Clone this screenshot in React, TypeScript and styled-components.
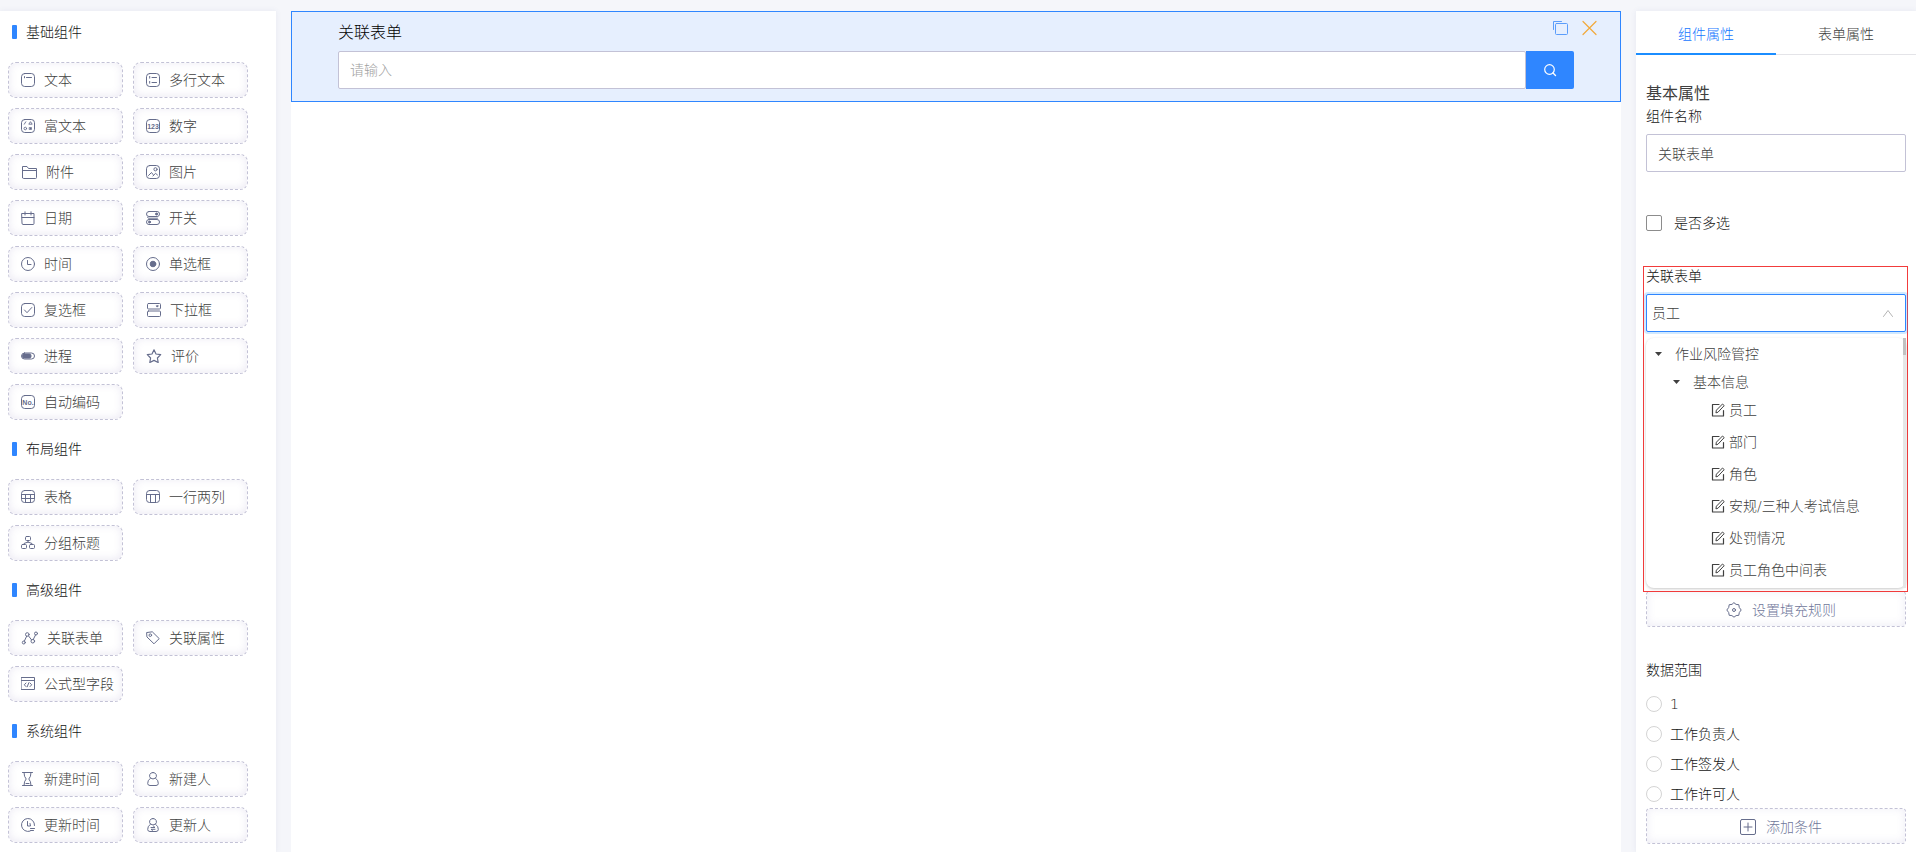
import React, { useState } from "react";
import styled, { createGlobalStyle } from "styled-components";

const color = {
  page: "#f5f6fa",
  primary: "#2f86ff",
  tab: "#1b8dff",
  border: "#c3c2d6",
  icon: "#666d8c",
  text: "#404040",
  strong: "#141414",
};

const GlobalStyle = createGlobalStyle`
  *, *::before, *::after { box-sizing: border-box; }
  body {
    margin: 0;
    background: ${color.page};
    color: ${color.text};
    font: 300 14px/22px "DejaVu Sans", "Noto Sans CJK SC", sans-serif;
  }
  button, input, select { font: inherit; color: inherit; }
  svg { display: block; flex: none; }
`;

/* ---------- icons ---------- */

const Svg = styled.svg`
  fill: none;
  stroke: currentColor;
  stroke-width: 1;
  stroke-linecap: round;
  stroke-linejoin: round;
`;

const Glyphs = styled.text`
  font: 700 7px "Liberation Sans Narrow", "Liberation Sans", sans-serif;
  fill: currentColor;
  stroke: none;
  text-anchor: middle;
`;

const Frame = () => <rect x="0.5" y="0.5" width="13" height="13" rx="3.2" />;

const icons: Record<string, { w?: number; art: React.ReactNode }> = {
  text: { art: <><Frame /><path d="M3.5 3.6v1.2M5.5 4.5h5" /></> },
  multiline: { art: <><Frame /><path d="M3.7 3.4v1.8M3.7 8.4v1.8M6 4.5h4.5M6 9.5h4.5" /></> },
  rich: {
    art: <><Frame /><path d="M3.3 5.2 4.8 2.8M8.2 5.2h3L9.7 3z" strokeWidth=".9" /><circle cx="4.300" cy="9.500" r="1.300" strokeWidth=".9" /><rect x="8.500" y="8.500" width="2" height="2" fill="currentColor" strokeWidth=".6" /></>,
  },
  number: { art: <><Frame /><Glyphs x="7" y="9.500">123</Glyphs></> },
  folder: { w: 16, art: <path d="M1.500 12.500V1.500H6L7.500 3.500H15.500V12.500Q15.500 13.500 14.500 13.500H2.500Q1.500 13.500 1.500 12.500ZM1.500 5.500H15.500" /> },
  image: { art: <><Frame /><circle cx="9.500" cy="4.300" r="1.600" /><path d="M2.500 10.500 5.500 7.500 7 9.500M7 11 9.500 8.300 11.500 10" /></> },
  date: { art: <path d="M1 2.500H13V12.500Q13 13.500 12 13.500H2Q1 13.500 1 12.500ZM1 6.500H13M4 .8V4M10 .8V4" /> },
  toggle: {
    art: <><rect x=".5" y=".5" width="13" height="5" rx="2.500" /><rect x=".5" y="8.500" width="13" height="5" rx="2.500" /><path d="M1.500 6.500Q2 7.200 3 7.200H11.500" /><circle cx="10.500" cy="3" r="1" fill="currentColor" /><circle cx="3.500" cy="11" r="1" fill="currentColor" /></>,
  },
  clock: { art: <><circle cx="7" cy="7" r="6.500" /><path d="M6.500 3.500V7.500H10" /></> },
  radio: { art: <><circle cx="7" cy="7" r="6.500" /><circle cx="7" cy="7" r="2.800" fill="currentColor" /></> },
  check: { art: <><Frame /><path d="M3.500 7 6 9.700 10.800 4.500" /></> },
  select: {
    w: 15,
    art: <><rect x="1.500" y=".5" width="13" height="5.500" rx="1" /><rect x="1.500" y="8" width="13" height="5.500" rx="1" /><path d="M10.700 2.800h1.600l-.8 1z" fill="currentColor" /></>,
  },
  progress: { art: <><rect x=".5" y="4" width="13" height="6" rx="3" /><rect x="1.500" y="5" width="8.500" height="4" rx="1.500" fill="currentColor" /></> },
  star: { w: 16, art: <path d="M8 .8 10 5 14.700 5.700 11.400 9 12.200 13.500 8 11.400 3.800 13.500 4.600 9 1.300 5.700 6 5Z" strokeWidth="1.200" /> },
  code: { art: <><Frame /><Glyphs x="7" y="9.500">No.</Glyphs></> },
  table: { art: <><rect x=".5" y=".5" width="13" height="12" rx="3" /><path d="M.5 4.500H13.500M.5 8.500H13.500M4.500 4.500V12.500M9.500 4.500V12.500" /></> },
  columns: { art: <><rect x=".5" y=".5" width="13" height="12" rx="3" /><path d="M.5 4.500H13.500M4.500 4.500V12.500M9.500 4.500V12.500" /></> },
  group: { art: <><rect x="4.500" y=".5" width="5" height="4" rx="1" /><rect x=".5" y="8.500" width="5" height="4" rx="1" /><rect x="8.500" y="8.500" width="5" height="4" rx="1" /><path d="M7 4.500V6.500M3 8.500V7.500L7 6 11 7.500V8.500" /></> },
  relation: {
    w: 17,
    art: <><circle cx="2.800" cy="11.500" r="1.500" /><circle cx="6.300" cy="3.500" r="1.800" /><circle cx="11.800" cy="10.200" r="1.800" /><circle cx="15" cy="2.500" r="1.500" /><path d="M3.400 10 5.600 5.300M7.500 4.900 10.500 8.800M12.300 8.400 14.500 4" /></>,
  },
  tag: { art: <><path d="M1 1.500 6.300.8 13.200 7.600 8 12.800 1.200 6.200Z" /><circle cx="4.300" cy="4.200" r="1.300" /></> },
  formula: { art: <path d="M.5.5H13.500V12.500H.5ZM.5 3.500H13.500M5 6 3.300 7.800 5 9.600M9 6 10.700 7.800 9 9.600M7.800 5.800 6.200 9.800" /> },
  hourglass: { art: <path d="M1.500.5H11.500M1.500 13.500H11.500M3 .5Q3 5 5.200 7Q3 9 3 13.500M10 .5Q10 5 7.800 7Q10 9 10 13.500M5 11.500H8" /> },
  person: { art: <path d="M7 .5A3.300 3.300 0 0 1 9.400 6.200Q12.500 8 12.300 11.500Q12.200 13.500 10 13.500H4Q1.800 13.500 1.700 11.500Q1.500 8 4.600 6.200A3.300 3.300 0 0 1 7 .5ZM4.600 6.200Q7 8 9.400 6.200" /> },
  clockEdit: { art: <path d="M9 13.200A6.500 6.500 0 1 1 13.500 7.500M6.500 3.500V8H9.500L9 5.500M9.500 10.500H13.500M9.500 12.500H12.500" /> },
  personEdit: { art: <path d="M7 .5A3.300 3.300 0 0 1 9.400 6.200Q12.500 8 12.300 11.500Q12.200 13.500 10 13.500H4Q1.800 13.500 1.700 11.500Q1.500 8 4.600 6.200A3.300 3.300 0 0 1 7 .5ZM4.600 6.200Q7 8 9.400 6.200M5 9.500H9L7.500 8.200M9 11.300H5L6.500 12.300" /> },
};

const Icon = ({ name }: { name: string }) => {
  const { w = 14, art } = icons[name];
  return <Svg width={w} height="14" viewBox={`0 0 ${w} 14`} aria-hidden>{art}</Svg>;
};

/* ---------- page ---------- */

const Page = styled.div`
  display: grid;
  grid-template-columns: 276px minmax(0, 1fr) 280px;
  gap: 15px;
  min-height: 100vh;
  padding-top: 11px;
`;

const Palette = styled.aside`
  display: flex;
  flex-direction: column;
  gap: 18px;
  padding: 10px 8px 9px;
  background: #fff;
  box-shadow: 0 0 6px rgba(60, 80, 140, 0.08);
`;

const GroupTitle = styled.h2`
  display: flex;
  align-items: center;
  gap: 9px;
  margin: 0 0 19px;
  padding-left: 4px;
  font-size: 14px;
  font-weight: 300;
  line-height: 22px;
  color: ${color.strong};

  &::before {
    content: "";
    width: 5px;
    height: 14px;
    border-radius: 1px;
    background: ${color.primary};
  }
`;

const Tiles = styled.div`
  display: grid;
  grid-template-columns: repeat(2, 115px);
  gap: 10px;
`;

const Tile = styled.button`
  display: flex;
  align-items: center;
  gap: 9px;
  height: 36px;
  padding: 0 0 0 12px;
  border: 1px dashed ${color.border};
  border-radius: 8px;
  background: #fff;
  box-shadow: inset 0 -1px 8px rgba(110, 100, 170, 0.14);
  white-space: nowrap;
  cursor: move;

  svg { color: ${color.icon}; }
`;

const Canvas = styled.main`
  background: #fff;
`;

const SelectedField = styled.section`
  position: relative;
  height: 91px;
  padding: 9px 46px 0;
  border: 1px solid ${color.primary};
  background: #e6effe;
`;

const FieldTitle = styled.label`
  display: block;
  margin-bottom: 6px;
  font-size: 16px;
  line-height: 24px;
  color: #000;
`;

const FieldActions = styled.div`
  position: absolute;
  top: 8px;
  right: 23px;
  display: flex;
  gap: 14px;
`;

const IconButton = styled.button<{ $tone: string }>`
  padding: 0;
  border: 0;
  background: none;
  color: ${(p) => p.$tone};
  cursor: pointer;
`;

const SearchRow = styled.div`
  display: flex;
`;

const TextInput = styled.input`
  flex: 1;
  width: 100%;
  min-width: 0;
  height: 38px;
  padding: 0 11px;
  border: 1px solid ${color.border};
  border-radius: 2px;
  background: #fff;
  outline: 0;

  &::placeholder { color: #a0a0a0; opacity: 1; }
`;

const SearchButton = styled.button`
  display: grid;
  place-items: center;
  width: 48px;
  height: 38px;
  padding: 0;
  border: 0;
  border-radius: 0 2px 2px 0;
  background: ${color.primary};
  color: #fff;
`;

const Properties = styled.aside`
  background: #fff;
  box-shadow: 0 0 6px rgba(60, 80, 140, 0.08);
`;

const Tabs = styled.div`
  display: grid;
  grid-template-columns: 1fr 1fr;
`;

const Tab = styled.button<{ $active: boolean }>`
  height: 44px;
  padding: 2px 0 0;
  border: 0;
  background: none;
  color: ${(p) => (p.$active ? "#1677ff" : color.text)};
  box-shadow: inset 0 ${(p) => (p.$active ? `-2px ${color.tab}` : "-1px #e4e4e8")};
  cursor: pointer;
`;

const Panel = styled.div`
  padding: 26px 10px 8px;
`;

const PanelTitle = styled.h3`
  margin: 0;
  font-size: 16px;
  font-weight: 400;
  line-height: 25px;
`;

const Label = styled.label`
  display: block;
  margin-bottom: 7px;
  color: ${color.strong};
`;

const NameLabel = styled(Label)`
  line-height: 21px;
`;

const CheckRow = styled.label`
  display: flex;
  align-items: center;
  gap: 12px;
  margin: 40px 0 32px;
  color: ${color.strong};
`;

const Checkbox = styled.input`
  appearance: none;
  width: 16px;
  height: 16px;
  margin: 0;
  border: 1px solid #8c8c8c;
  border-radius: 2px;
  background: #fff;

  &:checked { background: ${color.primary}; border-color: ${color.primary}; }
`;

const Highlight = styled.div`
  position: relative;
  z-index: 1;
  margin: 0 -2px 0 -3px;
  padding: 0 1px 3px 2px;
  border: 1px solid #f23c3c;
  background: #fff;
`;

const SelectLabel = styled(Label)`
  margin-bottom: 9px;
  line-height: 18px;
`;

const SelectBox = styled.div`
  position: relative;

  svg {
    position: absolute;
    top: 14px;
    right: 12px;
    color: #b5b5b5;
    pointer-events: none;
  }
`;

const Select = styled.select`
  appearance: none;
  display: block;
  width: 100%;
  height: 38px;
  padding: 0 28px 0 5px;
  border: 1px solid ${color.primary};
  border-radius: 2px;
  background: #fff;
  box-shadow: 0 0 0 2px rgba(24, 144, 255, 0.2);
  outline: 0;
`;

const Menu = styled.div`
  position: relative;
  display: flow-root;
  margin-top: 6px;
  padding-top: 2px;
  border-radius: 8px;
  background: #fff;
  box-shadow: 0 1px 3px rgba(0, 0, 0, 0.22);
`;

const ScrollTrack = styled.div`
  position: absolute;
  inset: 0 0 0 auto;
  width: 3px;
  background: #e6e6e6;

  &::before {
    content: "";
    display: block;
    height: 17px;
    background: #c1c1c1;
  }
`;

const TreeRow = styled.button<{ $level: number }>`
  display: flex;
  align-items: center;
  gap: 13px;
  width: 100%;
  height: 28px;
  padding: 0 0 0 ${(p) => 9 + p.$level * 18}px;
  border: 0;
  background: none;
`;

const Leaf = styled.button`
  display: flex;
  align-items: center;
  gap: 4px;
  width: 100%;
  height: 28px;
  margin-bottom: 4px;
  padding: 0 0 0 65px;
  border: 0;
  background: none;
`;

const DashedButton = styled.button`
  display: flex;
  align-items: center;
  justify-content: center;
  gap: 10px;
  width: 100%;
  height: 36px;
  padding: 2px 0 0 10px;
  border: 1px dashed ${color.border};
  border-radius: 4px;
  background: #fff;
  box-shadow: inset 0 -1px 8px rgba(110, 100, 170, 0.12);
  color: #70779a;

  svg { color: ${color.icon}; }
`;

const RuleButton = styled(DashedButton)`
  margin-top: -1px;
`;

const Scope = styled.fieldset`
  min-width: 0;
  margin: 32px 0 -1px;
  padding: 0;
  border: 0;
`;

const Legend = styled.legend`
  margin-bottom: 8px;
  padding: 0;
  color: ${color.strong};
`;

const RadioRow = styled.label`
  display: flex;
  align-items: center;
  gap: 8px;
  height: 30px;
  color: ${color.strong};
`;

const Radio = styled.input`
  appearance: none;
  width: 16px;
  height: 16px;
  margin: 0;
  border: 1px solid #d4d4d4;
  border-radius: 50%;
  background: #fff;

  &:checked { border: 5px solid ${color.primary}; }
`;

const groups = [
  {
    title: "基础组件",
    items: [
      ["text", "文本"], ["multiline", "多行文本"], ["rich", "富文本"], ["number", "数字"],
      ["folder", "附件"], ["image", "图片"], ["date", "日期"], ["toggle", "开关"],
      ["clock", "时间"], ["radio", "单选框"], ["check", "复选框"], ["select", "下拉框"],
      ["progress", "进程"], ["star", "评价"], ["code", "自动编码"],
    ],
  },
  { title: "布局组件", items: [["table", "表格"], ["columns", "一行两列"], ["group", "分组标题"]] },
  { title: "高级组件", items: [["relation", "关联表单"], ["tag", "关联属性"], ["formula", "公式型字段"]] },
  {
    title: "系统组件",
    items: [["hourglass", "新建时间"], ["person", "新建人"], ["clockEdit", "更新时间"], ["personEdit", "更新人"]],
  },
];

const forms = ["员工", "部门", "角色", "安规/三种人考试信息", "处罚情况", "员工角色中间表"];
const scopes = ["1", "工作负责人", "工作签发人", "工作许可人"];

const Caret = () => (
  <Svg width="7" height="6" viewBox="0 0 7 6" aria-hidden>
    <path d="M0 1H7L3.500 5Z" fill="currentColor" stroke="none" />
  </Svg>
);

export default function App() {
  const [tab, setTab] = useState(0);
  const [form, setForm] = useState(forms[0]);

  return (
    <>
      <GlobalStyle />
      <Page>
        <Palette>
          {groups.map((group) => (
            <section key={group.title}>
              <GroupTitle>{group.title}</GroupTitle>
              <Tiles>
                {group.items.map(([icon, name]) => (
                  <Tile key={name} type="button"><Icon name={icon} />{name}</Tile>
                ))}
              </Tiles>
            </section>
          ))}
        </Palette>

        <Canvas>
          <SelectedField>
            <FieldTitle htmlFor="related">关联表单</FieldTitle>
            <SearchRow>
              <TextInput id="related" placeholder="请输入" />
              <SearchButton type="button" aria-label="搜索">
                <Svg width="14" height="14" viewBox="0 0 14 14">
                  <circle cx="6.500" cy="6.500" r="4.800" strokeWidth="1.200" />
                  <path d="M10 10 12.500 12.500" strokeWidth="1.400" />
                </Svg>
              </SearchButton>
            </SearchRow>
            <FieldActions>
              <IconButton type="button" aria-label="复制" $tone="#5b9dfb">
                <Svg width="15" height="16" viewBox="0 0 15 16">
                  <path d="M.5 9.500V1.500H8.500" />
                  <rect x="2.500" y="3.500" width="12" height="11" rx="1" />
                </Svg>
              </IconButton>
              <IconButton type="button" aria-label="删除" $tone="#f2a93b">
                <Svg width="15" height="16" viewBox="0 0 15 16">
                  <path d="M1 1.500 14 14.500M14 1.500 1 14.500" strokeWidth="1.200" />
                </Svg>
              </IconButton>
            </FieldActions>
          </SelectedField>
        </Canvas>

        <Properties>
          <Tabs role="tablist">
            {["组件属性", "表单属性"].map((name, i) => (
              <Tab key={name} role="tab" type="button" aria-selected={tab === i} $active={tab === i} onClick={() => setTab(i)}>
                {name}
              </Tab>
            ))}
          </Tabs>
          <Panel>
            <PanelTitle>基本属性</PanelTitle>
            <NameLabel htmlFor="name">组件名称</NameLabel>
            <TextInput id="name" defaultValue="关联表单" />
            <CheckRow><Checkbox type="checkbox" />是否多选</CheckRow>

            <Highlight>
              <SelectLabel htmlFor="form">关联表单</SelectLabel>
              <SelectBox>
                <Select id="form" value={form} onChange={(e) => setForm(e.target.value)}>
                  {forms.map((name) => <option key={name}>{name}</option>)}
                </Select>
                <Svg width="12" height="12" viewBox="0 0 12 12">
                  <path d="M1.500 8.500 6 2.500 10.500 8.500" />
                </Svg>
              </SelectBox>
              <Menu>
                <TreeRow type="button" $level={0}><Caret />作业风险管控</TreeRow>
                <TreeRow type="button" $level={1}><Caret />基本信息</TreeRow>
                {forms.map((name) => (
                  <Leaf key={name} type="button" onClick={() => setForm(name)}>
                    <Svg width="14" height="14" viewBox="0 0 14 14">
                      <path d="M8 1.500H1.500V13H12.500V7.500" strokeWidth="1.200" />
                      <path d="M5 9.500 5.400 7.200 11.500 1 13.200 2.600 7.200 9Z" />
                    </Svg>
                    {name}
                  </Leaf>
                ))}
                <ScrollTrack />
              </Menu>
            </Highlight>
            <RuleButton type="button">
              <Svg width="16" height="16" viewBox="0 0 16 16">
                <path d="M8 .8 10.100 2.400 12.800 2.700 13.300 5.500 15.200 8 13.300 10.500 12.800 13.300 10.100 13.600 8 15.200 5.900 13.600 3.200 13.300 2.700 10.500.8 8 2.700 5.500 3.200 2.700 5.900 2.400Z" />
                <circle cx="8" cy="8" r="1.500" />
              </Svg>
              设置填充规则
            </RuleButton>

            <Scope>
              <Legend>数据范围</Legend>
              {scopes.map((name) => (
                <RadioRow key={name}><Radio type="radio" name="scope" />{name}</RadioRow>
              ))}
            </Scope>
            <DashedButton type="button">
              <Svg width="16" height="16" viewBox="0 0 16 16">
                <rect x=".5" y=".5" width="15" height="15" rx="1.500" />
                <path d="M8 4V12M4 8H12" />
              </Svg>
              添加条件
            </DashedButton>
          </Panel>
        </Properties>
      </Page>
    </>
  );
}
